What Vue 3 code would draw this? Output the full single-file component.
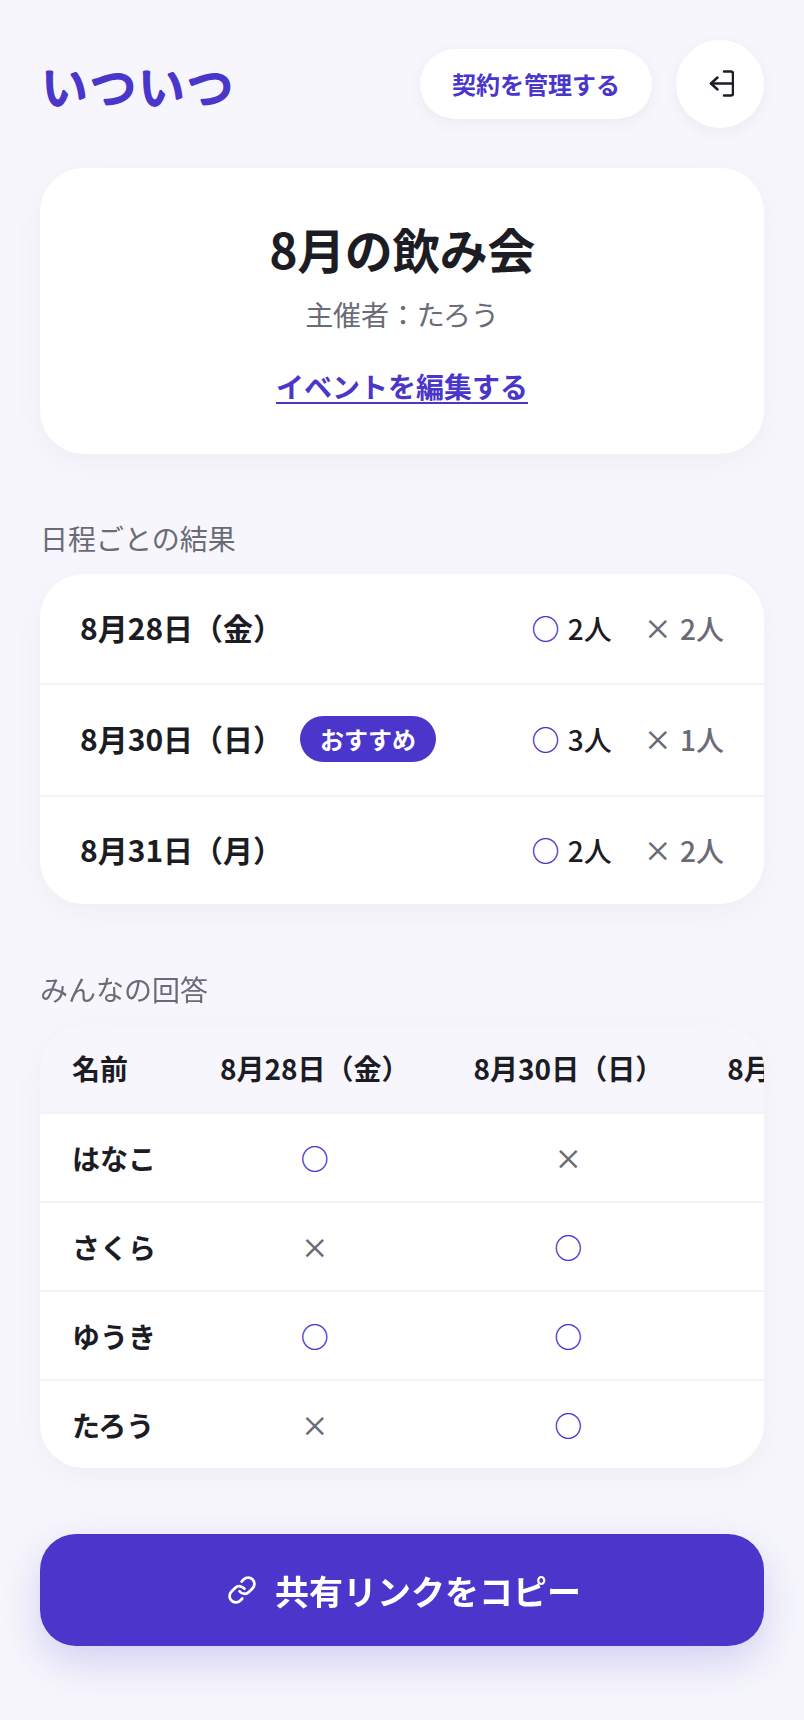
<script setup>
const dates = [
  { label: '8月28日（金）', ok: 2, ng: 2 },
  { label: '8月30日（日）', ok: 3, ng: 1, best: true },
  { label: '8月31日（月）', ok: 2, ng: 2 },
]

const answers = [
  { name: 'はなこ', marks: ['○', '×', '○'] },
  { name: 'さくら', marks: ['×', '○', '○'] },
  { name: 'ゆうき', marks: ['○', '○', '×'] },
  { name: 'たろう', marks: ['×', '○', '×'] },
]
</script>

<template>
  <div class="page">
    <header class="header">
      <svg class="logo" width="220" height="80" viewBox="0 0 220 80">
        <text x="1.5" y="60">いついつ</text>
      </svg>
      <div class="header__actions">
        <button class="manage" type="button">契約を管理する</button>
        <button class="logout" type="button" aria-label="ログアウト">
          <svg width="28" height="28" viewBox="0 0 28 28" fill="none" stroke="#1c1c24" stroke-width="2.5" stroke-linecap="round" stroke-linejoin="round">
            <path d="M18 1.5h7a2 2 0 0 1 2 2v20a2 2 0 0 1-2 2h-7" />
            <path d="M27 13.5H5" />
            <path d="M11.5 7.5l-6.5 6 6.5 6" />
          </svg>
        </button>
      </div>
    </header>

    <section class="event">
      <h1 class="event__title">8月の飲み会</h1>
      <p class="event__host">主催者：たろう</p>
      <a class="event__edit" href="#">イベントを編集する</a>
    </section>

    <h2 class="label label--dates">日程ごとの結果</h2>
    <section class="card">
      <div v-for="d in dates" :key="d.label" class="date" :class="{ 'date--best': d.best }">
        <span class="date__label">{{ d.label }}</span>
        <span v-if="d.best" class="date__badge">おすすめ</span>
        <span class="date__counts">
          <span class="count"><span class="mark-ok count__mark">○</span> {{ d.ok }}人</span>
          <span class="count count--ng"><span class="count__mark">×</span> {{ d.ng }}人</span>
        </span>
      </div>
    </section>

    <h2 class="label label--answers">みんなの回答</h2>
    <section class="card table-wrap">
      <table class="table">
        <thead>
          <tr>
            <th class="table__name">名前</th>
            <th v-for="d in dates" :key="d.label">{{ d.label }}</th>
          </tr>
        </thead>
        <tbody>
          <tr v-for="a in answers" :key="a.name">
            <td class="table__name">{{ a.name }}</td>
            <td v-for="(m, i) in a.marks" :key="i" :class="m === '○' ? 'mark-ok' : 'mark-ng'">{{ m }}</td>
          </tr>
        </tbody>
      </table>
    </section>

    <button class="share" type="button">
      <svg width="30" height="30" viewBox="0 0 24 24" fill="none" stroke="#fff" stroke-width="2.2" stroke-linecap="round" stroke-linejoin="round">
        <path d="M10 13a5 5 0 0 0 7.54.54l3-3a5 5 0 0 0-7.07-7.07l-1.72 1.71" />
        <path d="M14 11a5 5 0 0 0-7.54-.54l-3 3a5 5 0 0 0 7.07 7.07l1.71-1.71" />
      </svg>
      共有リンクをコピー
    </button>
  </div>
</template>

<style>
body {
  background: #f6f6fc;
}
</style>

<style scoped>
.page {
  box-sizing: border-box;
  width: 804px;
  min-height: 1720px;
  padding: 40px 40px 0;
  background: #f6f6fc;
  color: #1c1c24;
  font-family: "Noto Sans CJK JP", "Noto Sans", sans-serif;
}

.header {
  display: flex;
  align-items: center;
  justify-content: space-between;
  height: 88px;
}

.header__actions {
  display: flex;
  align-items: center;
  gap: 24px;
}

.logo text {
  fill: #4a36cb;
  stroke: #4a36cb;
  stroke-width: 3px;
  stroke-linejoin: round;
  font-size: 46px;
  font-weight: 400;
  letter-spacing: 2.5px;
}

.manage {
  width: 232px;
  height: 70px;
  padding: 0 0 2px;
  border: 0;
  border-radius: 35px;
  background: #fff;
  box-shadow: 0 4px 16px rgba(28, 28, 60, 0.05);
  color: #4a36cb;
  font: 700 24px "Noto Sans CJK JP", sans-serif;
}

.logout {
  display: flex;
  align-items: center;
  justify-content: center;
  width: 88px;
  height: 88px;
  padding: 0;
  border: 0;
  border-radius: 50%;
  background: #fff;
  box-shadow: 0 4px 16px rgba(28, 28, 60, 0.05);
}

.event {
  box-sizing: border-box;
  height: 286px;
  margin-top: 40px;
  padding-top: 48px;
  border-radius: 44px;
  background: #fff;
  box-shadow: 0 8px 32px rgba(28, 28, 60, 0.04);
  text-align: center;
}

.event__title {
  margin: 0;
  font-size: 48px;
  font-weight: 700;
  letter-spacing: -0.5px;
  line-height: 64px;
}

.event__host {
  margin: 10px 0 0;
  color: #6b6b78;
  font-size: 28px;
  letter-spacing: -0.1px;
  line-height: 48px;
}

.event__edit {
  display: inline-block;
  margin-top: 28px;
  color: #4a36cb;
  font-size: 28px;
  font-weight: 700;
  line-height: 40px;
  text-decoration: underline;
  text-underline-offset: 4px;
}

.label {
  margin: 0;
  color: #6b6b78;
  font-size: 28px;
  font-weight: 400;
  line-height: 40px;
}

.label--dates {
  margin-top: 64px;
}

.label--answers {
  margin-top: 65px;
}

.card {
  margin-top: 16px;
  border-radius: 44px;
  background: #fff;
  box-shadow: 0 8px 32px rgba(28, 28, 60, 0.04);
  overflow: hidden;
}

.date {
  display: flex;
  align-items: center;
  box-sizing: border-box;
  height: 111px;
  padding: 0 40px 2px;
  border-bottom: 2px solid #f2f2f7;
}

.date--best {
  height: 112px;
}

.date:last-child {
  height: 107px;
  border-bottom: 0;
}

.date__label {
  padding-bottom: 2px;
  font-size: 30px;
  font-weight: 700;
}

.date__badge {
  margin-left: 17px;
  padding: 0 20px;
  border-radius: 23px;
  background: #4a36cb;
  color: #fff;
  font-size: 24px;
  font-weight: 700;
  line-height: 46px;
}

.date__counts {
  display: flex;
  gap: 32px;
  margin-left: auto;
  font-size: 28px;
  font-weight: 500;
}

.count__mark {
  margin-right: 2px;
}

.count--ng {
  color: #6b6b78;
}

.mark-ok {
  color: #4a36cb;
  font-weight: 700;
}

.mark-ng {
  color: #6b6b78;
}

.table-wrap {
  overflow-x: auto;
  scrollbar-width: none;
}

.table {
  border-collapse: collapse;
  white-space: nowrap;
  font-size: 28px;
}

.table th {
  height: 85px;
  padding: 0 32px 2px;
  background: #f6f6fc;
  font-weight: 700;
}

.table td {
  height: 87px;
  padding: 0 32px;
  border-top: 2px solid #f2f2f7;
  font-weight: 500;
  text-align: center;
}

.table td.mark-ok {
  font-weight: 700;
}

.table .table__name {
  font-weight: 700;
  text-align: left;
}

.share {
  display: flex;
  align-items: center;
  justify-content: center;
  gap: 18px;
  width: 100%;
  height: 112px;
  margin-top: 66px;
  padding: 0 0 0 4px;
  border: 0;
  border-radius: 36px;
  background: #4a36cb;
  box-shadow: 0 16px 40px rgba(74, 54, 203, 0.2);
  color: #fff;
  font: 700 34px "Noto Sans CJK JP", sans-serif;
}
</style>
